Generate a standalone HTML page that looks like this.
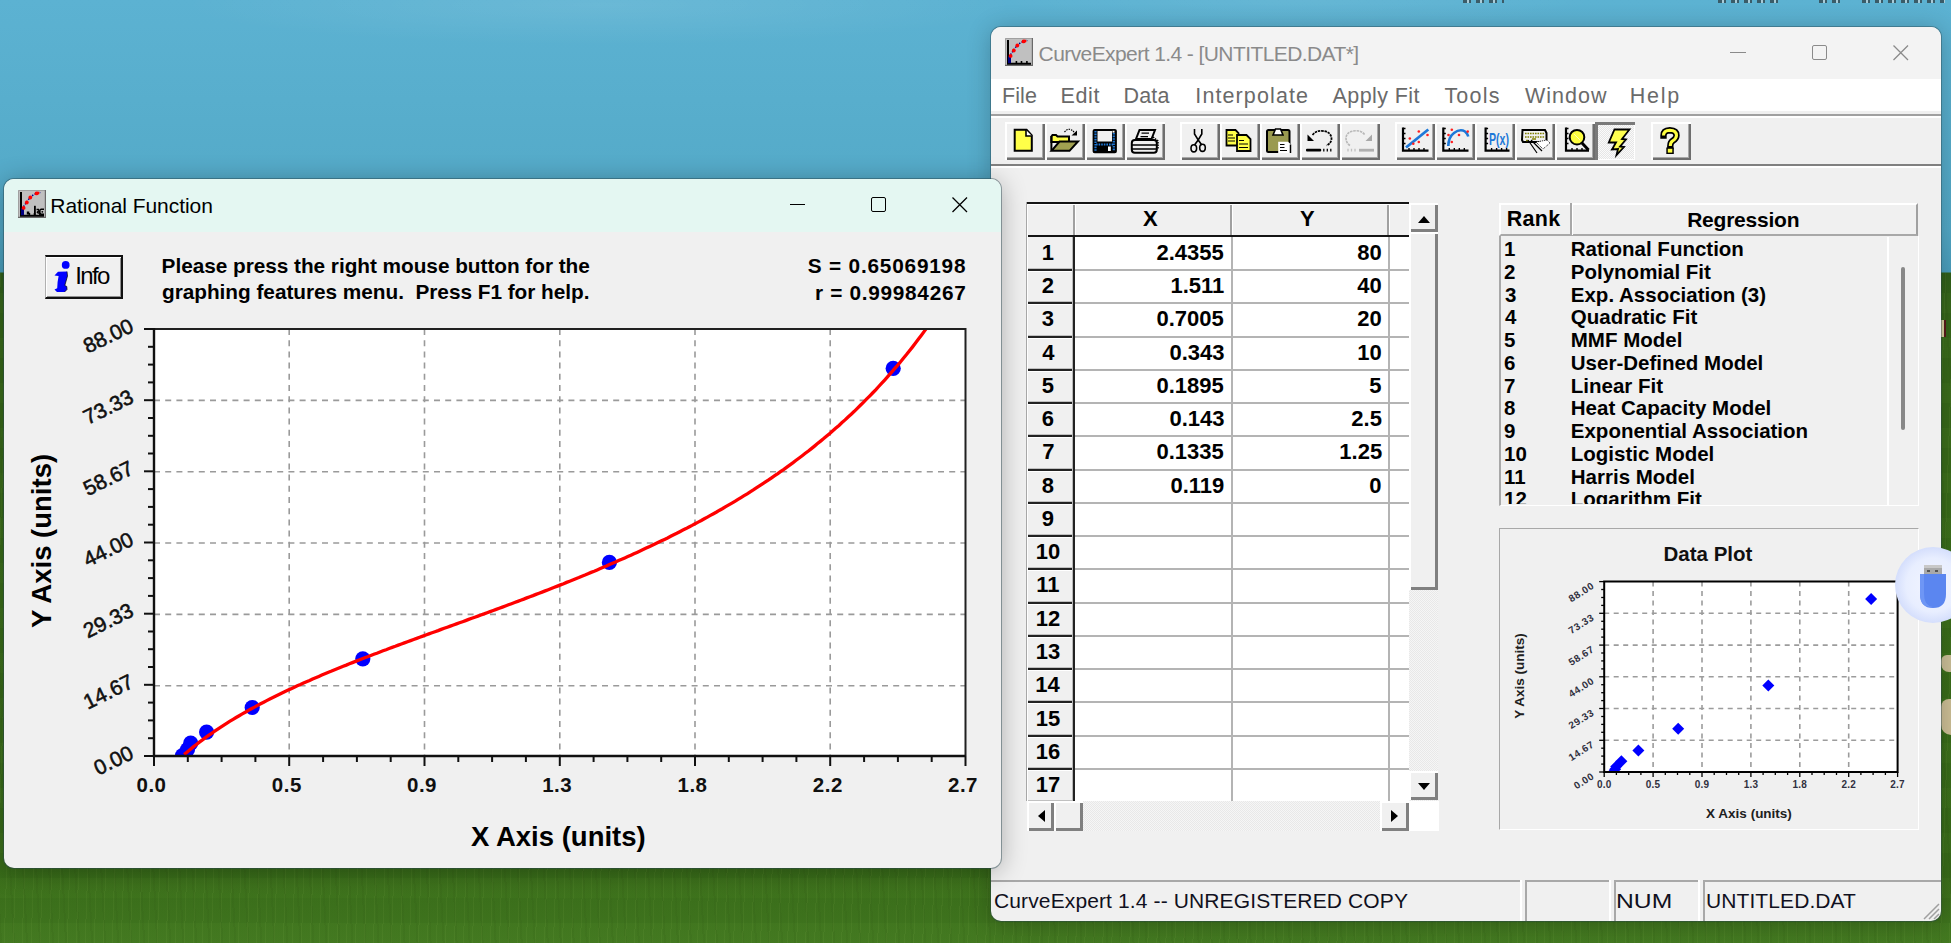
<!DOCTYPE html><html><head><meta charset="utf-8"><style>
html,body{margin:0;padding:0;width:1951px;height:943px;overflow:hidden;position:relative;background:#56acd2;font-family:"Liberation Sans",sans-serif}
div,svg{position:absolute;box-sizing:border-box}
.t{white-space:pre;line-height:1;color:#000}
</style></head><body>
<div style="left:0;top:0;width:1951px;height:943px;background:linear-gradient(180deg,rgb(92,178,210) 0px,rgb(88,174,205) 100px,rgb(82,168,198) 230px,rgb(74,158,188) 272px,rgb(50,98,28) 273px,rgb(56,106,26) 330px,rgb(60,112,27) 600px,rgb(58,110,26) 870px,rgb(66,120,32) 943px)"></div>
<div style="left:0;top:0;width:1951px;height:120px;background:radial-gradient(ellipse 420px 40px at 600px 5px,rgba(255,255,255,0.09),rgba(255,255,255,0) 100%),radial-gradient(ellipse 300px 30px at 1300px 0px,rgba(255,255,255,0.06),rgba(255,255,255,0) 100%)"></div>
<div style="left:0;top:273px;width:1951px;height:670px;opacity:0.55;background:repeating-linear-gradient(92deg,rgba(190,220,120,0.10) 0 1px,rgba(0,0,0,0) 1px 9px),repeating-linear-gradient(87deg,rgba(30,60,10,0.12) 0 2px,rgba(0,0,0,0) 2px 13px),repeating-linear-gradient(0deg,rgba(120,170,60,0.06) 0 20px,rgba(20,50,10,0.06) 20px 45px)"></div>
<div style="left:1463px;top:0;width:41px;height:3px;opacity:0.6;background:repeating-linear-gradient(90deg,#222 0 4px,#ddd 4px 6px,#222 6px 8px,rgba(0,0,0,0) 8px 13px)"></div>
<div style="left:1718px;top:0;width:63px;height:3px;opacity:0.6;background:repeating-linear-gradient(90deg,#222 0 4px,#ddd 4px 6px,#222 6px 8px,rgba(0,0,0,0) 8px 13px)"></div>
<div style="left:1819px;top:0;width:22px;height:3px;opacity:0.6;background:repeating-linear-gradient(90deg,#222 0 4px,#ddd 4px 6px,#222 6px 8px,rgba(0,0,0,0) 8px 13px)"></div>
<div style="left:1862px;top:0;width:83px;height:3px;opacity:0.6;background:repeating-linear-gradient(90deg,#222 0 4px,#ddd 4px 6px,#222 6px 8px,rgba(0,0,0,0) 8px 13px)"></div>
<div style="left:1941px;top:655px;width:14px;height:17px;border-radius:6px 0 0 8px;background:#cbbf98"></div>
<div style="left:1941px;top:699px;width:14px;height:36px;border-radius:8px 0 0 10px;background:#cdbf96"></div>
<div style="left:1941px;top:320px;width:5px;height:17px;background:#d8d0a0;border-right:2px solid #5a1a1a"></div>
<div style="left:991px;top:27px;width:950px;height:894px;background:#f0f0f0;border-radius:10px;overflow:hidden;box-shadow:0 0 0 1px rgba(40,70,80,0.4),0 2px 24px rgba(0,0,0,0.24)">
<div style="left:0px;top:0px;width:950px;height:52px;background:#f3f3f3"></div>
<svg style="left:14px;top:11px" width="28" height="28" viewBox="0 0 28 28"><rect x="0" y="0" width="28" height="28" fill="#c0c0c0"/><path d="M0.5 27.5 V0.5 H27.5" stroke="#a0a0a0" stroke-width="1" fill="none"/><path d="M0 27.4 H28 M27.4 0 V28" stroke="#6a6a6a" stroke-width="1.2" fill="none"/><path d="M3 2 V25.8 H26" stroke="#000" stroke-width="2" fill="none"/><path d="M11.4 25 V23 M16.5 25 V23 M21.9 25 V23" stroke="#000" stroke-width="1.6"/><rect x="3" y="18.7" width="3" height="6.5" fill="#000080"/><path d="M4 19 L8.6 12.2 L12.2 7.1 L16 4.5 L22.3 2.4" stroke="#000090" stroke-width="1.5" fill="none" stroke-dasharray="1.4 1.4"/><circle cx="5.6" cy="17.9" r="1.9" fill="#f00"/><circle cx="8.8" cy="12.5" r="1.9" fill="#f00"/><circle cx="12.3" cy="7.5" r="1.9" fill="#f00"/><circle cx="18.5" cy="3.4" r="1.9" fill="#f00"/><circle cx="20" cy="3" r="1.5" fill="#f00"/></svg>
<div class="t" style="left:47.60px;top:16.02px;font-size:21px;;letter-spacing:-0.584px;color:#8a8a8a">CurveExpert 1.4 - [UNTITLED.DAT*]</div>
<div style="left:739px;top:25px;width:16px;height:1.2px;background:#8a8a8a"></div>
<div style="left:821px;top:18px;width:15px;height:15px;border:1.3px solid #8a8a8a;border-radius:2px"></div>
<svg style="left:902px;top:18px" width="16" height="16"><path d="M0.5 0.5L15 15M15 0.5L0.5 15" stroke="#8a8a8a" stroke-width="1.3"/></svg>
<div style="left:0px;top:52px;width:950px;height:32px;background:#fff"></div>
<div class="t" style="left:11.00px;top:59.10px;font-size:21.5px;;letter-spacing:0.100px;color:#6a6a6a">File</div>
<div class="t" style="left:69.40px;top:59.10px;font-size:21.5px;;letter-spacing:0.700px;color:#6a6a6a">Edit</div>
<div class="t" style="left:132.50px;top:59.10px;font-size:21.5px;;letter-spacing:0.167px;color:#6a6a6a">Data</div>
<div class="t" style="left:204.30px;top:59.10px;font-size:21.5px;;letter-spacing:1.110px;color:#6a6a6a">Interpolate</div>
<div class="t" style="left:341.50px;top:59.10px;font-size:21.5px;;letter-spacing:0.425px;color:#6a6a6a">Apply Fit</div>
<div class="t" style="left:453.40px;top:59.10px;font-size:21.5px;;letter-spacing:1.225px;color:#6a6a6a">Tools</div>
<div class="t" style="left:534.10px;top:59.10px;font-size:21.5px;;letter-spacing:0.980px;color:#6a6a6a">Window</div>
<div class="t" style="left:638.80px;top:59.10px;font-size:21.5px;;letter-spacing:1.700px;color:#6a6a6a">Help</div>
<div style="left:0px;top:87px;width:950px;height:2px;background:#a0a0a0"></div>
<div style="left:0px;top:89px;width:950px;height:2px;background:#fff"></div>
<div style="left:0px;top:137px;width:950px;height:2px;background:#808080"></div>
<div style="left:0px;top:139px;width:950px;height:2px;background:#fff"></div>
<div style="left:14px;top:95px;width:40px;height:38px;background:#f0f0f0;box-shadow:inset 2px 2px 0 #fff,inset -2px -2px 0 #6e6e6e,inset -3px -3px 0 #a8a8a8"></div>
<svg style="left:14px;top:95px" width="40" height="38" viewBox="1005 122 40 38"><path d="M1014.7 129.7 H1026.6 L1031.8 135.5 V150.8 H1014.7 Z" fill="#ffff48" stroke="#000" stroke-width="2"/><path d="M1026 130 V136 H1032" fill="#fff" stroke="#000" stroke-width="1.6"/></svg>
<div style="left:54px;top:95px;width:40px;height:38px;background:#f0f0f0;box-shadow:inset 2px 2px 0 #fff,inset -2px -2px 0 #6e6e6e,inset -3px -3px 0 #a8a8a8"></div>
<svg style="left:54px;top:95px" width="40" height="38" viewBox="1045 122 40 38"><path d="M1051.4 136.5 L1052.5 135 H1056 L1057.5 136.5 H1069 V142 H1051.4 Z" fill="#ffff48" stroke="#000" stroke-width="2"/><path d="M1051.4 136 V150.8" stroke="#000" stroke-width="2"/><path d="M1051.5 150.8 L1059.5 141.5 H1078 L1069.5 150.8 Z" fill="#a0a050" stroke="#000" stroke-width="2"/><path d="M1064.5 132 Q1069 126.5 1074 132" fill="none" stroke="#000" stroke-width="1.2" stroke-dasharray="1.5 1"/><path d="M1077 130.5 V135.5 H1071.5 Z" fill="#000"/></svg>
<div style="left:94px;top:95px;width:40px;height:38px;background:#f0f0f0;box-shadow:inset 2px 2px 0 #fff,inset -2px -2px 0 #6e6e6e,inset -3px -3px 0 #a8a8a8"></div>
<svg style="left:94px;top:95px" width="40" height="38" viewBox="1085 122 40 38"><rect x="1093.6" y="129.9" width="22.3" height="22.3" fill="#000" stroke="#000" stroke-width="2" rx="1"/><rect x="1097.5" y="131" width="14.5" height="10.5" fill="#f0f0f0"/><path d="M1095.5 131 V151 M1113.8 133 V151 M1096 144.5 H1113.5" stroke="#1e78d8" stroke-width="2.2" stroke-dasharray="1.6 1"/><rect x="1108" y="146.5" width="2.8" height="4.5" fill="#fff"/><rect x="1112.5" y="130.8" width="2" height="1.8" fill="#fff"/></svg>
<div style="left:134px;top:95px;width:40px;height:38px;background:#f0f0f0;box-shadow:inset 2px 2px 0 #fff,inset -2px -2px 0 #6e6e6e,inset -3px -3px 0 #a8a8a8"></div>
<svg style="left:134px;top:95px" width="40" height="38" viewBox="1125 122 40 38"><path d="M1139.5 130 H1155 L1151.5 139 H1136 Z" fill="#f0f0f0" stroke="#000" stroke-width="2"/><path d="M1141.5 133.2 H1149 M1140.5 136.7 H1148" stroke="#000" stroke-width="1.2"/><rect x="1131.8" y="140" width="25" height="12.7" rx="3" fill="#f0f0f0" stroke="#000" stroke-width="2"/><path d="M1132 145 H1156 M1132 149 H1156" stroke="#000" stroke-width="1.6"/><path d="M1153 137 L1158 141 V149" stroke="#000" stroke-width="1.5" fill="none" stroke-dasharray="1.5 1"/></svg>
<div style="left:189px;top:95px;width:40px;height:38px;background:#f0f0f0;box-shadow:inset 2px 2px 0 #fff,inset -2px -2px 0 #6e6e6e,inset -3px -3px 0 #a8a8a8"></div>
<svg style="left:189px;top:95px" width="40" height="38" viewBox="1180 122 40 38"><path d="M1194.5 129 V134 L1198.2 140 L1201.8 134 V129" stroke="#000" stroke-width="1.6" fill="none"/><path d="M1198.2 140 L1194.5 145 M1198.2 140 L1201.8 145" stroke="#000" stroke-width="1.6"/><ellipse cx="1193.8" cy="148.3" rx="2.8" ry="3.6" fill="none" stroke="#000" stroke-width="1.6"/><ellipse cx="1202.5" cy="147.8" rx="2.8" ry="3.6" fill="none" stroke="#000" stroke-width="1.6"/></svg>
<div style="left:229px;top:95px;width:40px;height:38px;background:#f0f0f0;box-shadow:inset 2px 2px 0 #fff,inset -2px -2px 0 #6e6e6e,inset -3px -3px 0 #a8a8a8"></div>
<svg style="left:229px;top:95px" width="40" height="38" viewBox="1220 122 40 38"><path d="M1226.5 130 H1235.5 L1238.5 133 V145.5 H1226.5 Z" fill="#ffff48" stroke="#000" stroke-width="1.8"/><path d="M1228 135 H1233 M1228 138 H1235 M1228 141 H1235" stroke="#000" stroke-width="1.1"/><path d="M1237 135 H1246.5 L1250.5 139 V151 H1237 Z" fill="#ffff48" stroke="#000" stroke-width="1.8"/><path d="M1239 140.5 H1244 M1239 144 H1248 M1239 147.5 H1248" stroke="#000" stroke-width="1.2"/></svg>
<div style="left:269px;top:95px;width:40px;height:38px;background:#f0f0f0;box-shadow:inset 2px 2px 0 #fff,inset -2px -2px 0 #6e6e6e,inset -3px -3px 0 #a8a8a8"></div>
<svg style="left:269px;top:95px" width="40" height="38" viewBox="1260 122 40 38"><rect x="1267" y="130" width="22.5" height="22" rx="1.5" fill="#9a9a50" stroke="#000" stroke-width="2"/><path d="M1273 135 L1275.5 129 H1280.5 L1283 135 Z" fill="#fff" stroke="#000" stroke-width="1.6"/><path d="M1278.2 141.8 H1288 L1291.5 145 V153 H1278.2 Z" fill="#fff" stroke="none"/><path d="M1280 144.5 H1284.5 M1280 147.5 H1284.5 M1280 150.5 H1287" stroke="#000" stroke-width="1.2"/><path d="M1290.5 144.5 V153" stroke="#000" stroke-width="1.5"/></svg>
<div style="left:309px;top:95px;width:40px;height:38px;background:#f0f0f0;box-shadow:inset 2px 2px 0 #fff,inset -2px -2px 0 #6e6e6e,inset -3px -3px 0 #a8a8a8"></div>
<svg style="left:309px;top:95px" width="40" height="38" viewBox="1300 122 40 38"><path d="M1312.5 135 Q1316 130.5 1321.5 130.8 Q1331.5 131.5 1331.5 139 Q1331 143.5 1326.5 145.5" fill="none" stroke="#000" stroke-width="1.8" stroke-dasharray="2.5 0.8"/><path d="M1307.5 134.5 V141 H1314 Z" fill="#000"/><rect x="1306" y="148.8" width="15.2" height="2.8" rx="1" fill="#000"/><path d="M1323.8 148.8 V151.6 M1327.3 148.8 V151.6 M1330.8 148.8 V151.6" stroke="#000" stroke-width="1.3"/></svg>
<div style="left:349px;top:95px;width:40px;height:38px;background:#f0f0f0;box-shadow:inset 2px 2px 0 #fff,inset -2px -2px 0 #6e6e6e,inset -3px -3px 0 #a8a8a8"></div>
<svg style="left:349px;top:95px" width="40" height="38" viewBox="1340 122 40 38"><path d="M1350 145.5 Q1346 143 1346 138 Q1346.5 131 1356 130.8 Q1361.5 130.5 1365 135" fill="none" stroke="#b8b8b8" stroke-width="1.6" stroke-dasharray="2.5 0.8"/><path d="M1372 134.5 V141 H1365.5 Z" fill="#a8a8a8"/><rect x="1359" y="148.8" width="15" height="2.8" fill="#b0b0b0"/><path d="M1348 148.8 V151.6 M1351.5 148.8 V151.6 M1355 148.8 V151.6" stroke="#c0c0c0" stroke-width="1.3"/></svg>
<div style="left:404px;top:95px;width:40px;height:38px;background:#f0f0f0;box-shadow:inset 2px 2px 0 #fff,inset -2px -2px 0 #6e6e6e,inset -3px -3px 0 #a8a8a8"></div>
<svg style="left:404px;top:95px" width="40" height="38" viewBox="1395 122 40 38"><path d="M1403 127.5 V150.7 H1428.5" stroke="#000" stroke-width="2.2" fill="none"/><path d="M1403 128.5 H1405.5 M1403 133.5 H1405.5 M1403 138.5 H1405.5 M1403 143.5 H1405.5 M1409 150 V148 M1414 150 V148 M1419 150 V148 M1424 150 V148 " stroke="#000" stroke-width="1.4"/><path d="M1406 147.5 L1428.3 129.5" stroke="#1e78d8" stroke-width="2.8"/><circle cx="1409.8" cy="138.5" r="1.3" fill="#ff2020"/><circle cx="1418.8" cy="131.5" r="1.3" fill="#ff2020"/><circle cx="1413.3" cy="143.8" r="1.3" fill="#ff2020"/><circle cx="1418.8" cy="142" r="1.3" fill="#ff2020"/><circle cx="1427.5" cy="135" r="1.3" fill="#ff2020"/></svg>
<div style="left:444px;top:95px;width:40px;height:38px;background:#f0f0f0;box-shadow:inset 2px 2px 0 #fff,inset -2px -2px 0 #6e6e6e,inset -3px -3px 0 #a8a8a8"></div>
<svg style="left:444px;top:95px" width="40" height="38" viewBox="1435 122 40 38"><path d="M1443.3 127.5 V150.7 H1468.5" stroke="#000" stroke-width="2.2" fill="none"/><path d="M1443.3 128.5 H1445.8 M1443.3 133.5 H1445.8 M1443.3 138.5 H1445.8 M1443.3 143.5 H1445.8 M1449.3 150 V148 M1454.3 150 V148 M1459.3 150 V148 M1464.3 150 V148 " stroke="#000" stroke-width="1.4"/><path d="M1448.3 146 Q1448.5 137 1454 133 Q1460 128.5 1465 131.5 Q1467.5 133.5 1468.3 136.5" fill="none" stroke="#1e78d8" stroke-width="2.6"/><circle cx="1451.8" cy="129.8" r="1.3" fill="#ff2020"/><circle cx="1448.5" cy="135" r="1.3" fill="#ff2020"/><circle cx="1459" cy="135" r="1.3" fill="#ff2020"/><circle cx="1451.8" cy="142" r="1.3" fill="#ff2020"/><circle cx="1467.7" cy="131.6" r="1.3" fill="#ff2020"/></svg>
<div style="left:484px;top:95px;width:40px;height:38px;background:#f0f0f0;box-shadow:inset 2px 2px 0 #fff,inset -2px -2px 0 #6e6e6e,inset -3px -3px 0 #a8a8a8"></div>
<svg style="left:484px;top:95px" width="40" height="38" viewBox="1475 122 40 38"><path d="M1485.6 127.5 V150.7 H1509.5" stroke="#000" stroke-width="2.2" fill="none"/><path d="M1485.6 128.5 H1488.1 M1485.6 133.5 H1488.1 M1485.6 138.5 H1488.1 M1485.6 143.5 H1488.1 M1491.6 150 V148 M1496.6 150 V148 M1501.6 150 V148 M1506.6 150 V148 " stroke="#000" stroke-width="1.4"/><text x="1489" y="144.5" font-family="Liberation Sans" font-weight="bold" font-size="17" fill="#1e78d8" textLength="20" lengthAdjust="spacingAndGlyphs">P(x)</text></svg>
<div style="left:524px;top:95px;width:40px;height:38px;background:#f0f0f0;box-shadow:inset 2px 2px 0 #fff,inset -2px -2px 0 #6e6e6e,inset -3px -3px 0 #a8a8a8"></div>
<svg style="left:524px;top:95px" width="40" height="38" viewBox="1515 122 40 38"><path d="M1522.5 130 H1545 L1546.5 133 V142 H1523 L1522 140 Z" fill="#f0f0f0" stroke="#000" stroke-width="2"/><path d="M1525 133.5 H1545 M1525 137 H1545" stroke="#808000" stroke-width="1.6" stroke-dasharray="1.6 0.9"/><path d="M1526 140.5 H1528 M1532 139 H1536" stroke="#808000" stroke-width="1.5"/><path d="M1528 140 L1537 153 M1531 140 L1542 151" stroke="#000" stroke-width="1.2"/><path d="M1536 142 L1547 140 L1550 143 L1543 149 Z" fill="#fff" stroke="#000" stroke-width="0.9" stroke-dasharray="1 1"/></svg>
<div style="left:564px;top:95px;width:40px;height:38px;background:#f0f0f0;box-shadow:inset 2px 2px 0 #fff,inset -2px -2px 0 #6e6e6e,inset -3px -3px 0 #a8a8a8"></div>
<svg style="left:564px;top:95px" width="40" height="38" viewBox="1555 122 40 38"><path d="M1566 127.5 V150.7 H1589" stroke="#000" stroke-width="2.2" fill="none"/><path d="M1566 128.5 H1568.5 M1566 133.5 H1568.5 M1566 138.5 H1568.5 M1566 143.5 H1568.5 M1572 150 V148 M1577 150 V148 M1582 150 V148 M1587 150 V148 " stroke="#000" stroke-width="1.4"/><circle cx="1577" cy="137.2" r="7.3" fill="#ffff40" stroke="#000" stroke-width="2"/><path d="M1574 134 L1580 140" stroke="#fff" stroke-width="1" opacity="0.6"/><path d="M1582 143 L1588.5 150" stroke="#000" stroke-width="3"/></svg>
<div style="left:604px;top:95px;width:40px;height:38px;background:repeating-conic-gradient(#fafafa 0 25%,#e6e6e6 0 50%) 0 0/2px 2px;box-shadow:inset 3px 3px 0 #7a7a7a,inset -1px -1px 0 #fff"></div>
<svg style="left:604px;top:95px" width="40" height="38" viewBox="1595 122 40 38"><path d="M1614.5 129.5 H1629.5 L1622 139 L1626 139.5 L1620 146.5 L1624 147 L1616.5 155 L1618 149 L1612 149.5 L1616 142.5 L1608.8 142.5 Z" fill="#ffff50" stroke="#000" stroke-width="1.8" stroke-linejoin="miter"/></svg>
<div style="left:660px;top:95px;width:40px;height:38px;background:#f0f0f0;box-shadow:inset 2px 2px 0 #fff,inset -2px -2px 0 #6e6e6e,inset -3px -3px 0 #a8a8a8"></div>
<svg style="left:660px;top:95px" width="40" height="38" viewBox="1651 122 40 38"><path d="M1663.5 135.5 Q1663.5 130.5 1669.8 130.3 Q1676.5 130.5 1676.5 135.5 Q1676.5 138.5 1672.5 141 Q1670.3 142.5 1670.3 146" fill="none" stroke="#000" stroke-width="6.4" stroke-linecap="square"/><path d="M1663.5 135.5 Q1663.5 130.5 1669.8 130.3 Q1676.5 130.5 1676.5 135.5 Q1676.5 138.5 1672.5 141 Q1670.3 142.5 1670.3 146" fill="none" stroke="#ffff40" stroke-width="3"/><rect x="1666.3" y="147.5" width="7.5" height="6.5" fill="#000"/><rect x="1667.8" y="148.8" width="4.5" height="3.8" fill="#ffff40"/></svg>
<div style="left:35px;top:175px;width:383px;height:599px;background:#fff;overflow:hidden"><div style="left:0px;top:0px;width:383px;height:35px;background:#f0f0f0"></div><div style="left:0px;top:35px;width:47px;height:600px;background:#f0f0f0"></div><div style="left:49px;top:67px;width:334px;height:2px;background:#b4b4b4"></div><div style="left:0px;top:66px;width:47px;height:1px;background:#c0c0c0"></div><div style="left:1px;top:67px;width:46px;height:2px;background:#222"></div><div style="left:2px;top:69px;width:44px;height:1px;background:#fff"></div><div style="left:49px;top:100px;width:334px;height:2px;background:#b4b4b4"></div><div style="left:0px;top:99px;width:47px;height:1px;background:#c0c0c0"></div><div style="left:1px;top:100px;width:46px;height:2px;background:#222"></div><div style="left:2px;top:102px;width:44px;height:1px;background:#fff"></div><div style="left:49px;top:134px;width:334px;height:2px;background:#b4b4b4"></div><div style="left:0px;top:133px;width:47px;height:1px;background:#c0c0c0"></div><div style="left:1px;top:134px;width:46px;height:2px;background:#222"></div><div style="left:2px;top:136px;width:44px;height:1px;background:#fff"></div><div style="left:49px;top:167px;width:334px;height:2px;background:#b4b4b4"></div><div style="left:0px;top:166px;width:47px;height:1px;background:#c0c0c0"></div><div style="left:1px;top:167px;width:46px;height:2px;background:#222"></div><div style="left:2px;top:169px;width:44px;height:1px;background:#fff"></div><div style="left:49px;top:200px;width:334px;height:2px;background:#b4b4b4"></div><div style="left:0px;top:199px;width:47px;height:1px;background:#c0c0c0"></div><div style="left:1px;top:200px;width:46px;height:2px;background:#222"></div><div style="left:2px;top:202px;width:44px;height:1px;background:#fff"></div><div style="left:49px;top:233px;width:334px;height:2px;background:#b4b4b4"></div><div style="left:0px;top:232px;width:47px;height:1px;background:#c0c0c0"></div><div style="left:1px;top:233px;width:46px;height:2px;background:#222"></div><div style="left:2px;top:235px;width:44px;height:1px;background:#fff"></div><div style="left:49px;top:267px;width:334px;height:2px;background:#b4b4b4"></div><div style="left:0px;top:266px;width:47px;height:1px;background:#c0c0c0"></div><div style="left:1px;top:267px;width:46px;height:2px;background:#222"></div><div style="left:2px;top:269px;width:44px;height:1px;background:#fff"></div><div style="left:49px;top:300px;width:334px;height:2px;background:#b4b4b4"></div><div style="left:0px;top:299px;width:47px;height:1px;background:#c0c0c0"></div><div style="left:1px;top:300px;width:46px;height:2px;background:#222"></div><div style="left:2px;top:302px;width:44px;height:1px;background:#fff"></div><div style="left:49px;top:333px;width:334px;height:2px;background:#b4b4b4"></div><div style="left:0px;top:332px;width:47px;height:1px;background:#c0c0c0"></div><div style="left:1px;top:333px;width:46px;height:2px;background:#222"></div><div style="left:2px;top:335px;width:44px;height:1px;background:#fff"></div><div style="left:49px;top:366px;width:334px;height:2px;background:#b4b4b4"></div><div style="left:0px;top:365px;width:47px;height:1px;background:#c0c0c0"></div><div style="left:1px;top:366px;width:46px;height:2px;background:#222"></div><div style="left:2px;top:368px;width:44px;height:1px;background:#fff"></div><div style="left:49px;top:400px;width:334px;height:2px;background:#b4b4b4"></div><div style="left:0px;top:399px;width:47px;height:1px;background:#c0c0c0"></div><div style="left:1px;top:400px;width:46px;height:2px;background:#222"></div><div style="left:2px;top:402px;width:44px;height:1px;background:#fff"></div><div style="left:49px;top:433px;width:334px;height:2px;background:#b4b4b4"></div><div style="left:0px;top:432px;width:47px;height:1px;background:#c0c0c0"></div><div style="left:1px;top:433px;width:46px;height:2px;background:#222"></div><div style="left:2px;top:435px;width:44px;height:1px;background:#fff"></div><div style="left:49px;top:466px;width:334px;height:2px;background:#b4b4b4"></div><div style="left:0px;top:465px;width:47px;height:1px;background:#c0c0c0"></div><div style="left:1px;top:466px;width:46px;height:2px;background:#222"></div><div style="left:2px;top:468px;width:44px;height:1px;background:#fff"></div><div style="left:49px;top:499px;width:334px;height:2px;background:#b4b4b4"></div><div style="left:0px;top:498px;width:47px;height:1px;background:#c0c0c0"></div><div style="left:1px;top:499px;width:46px;height:2px;background:#222"></div><div style="left:2px;top:501px;width:44px;height:1px;background:#fff"></div><div style="left:49px;top:533px;width:334px;height:2px;background:#b4b4b4"></div><div style="left:0px;top:532px;width:47px;height:1px;background:#c0c0c0"></div><div style="left:1px;top:533px;width:46px;height:2px;background:#222"></div><div style="left:2px;top:535px;width:44px;height:1px;background:#fff"></div><div style="left:49px;top:566px;width:334px;height:2px;background:#b4b4b4"></div><div style="left:0px;top:565px;width:47px;height:1px;background:#c0c0c0"></div><div style="left:1px;top:566px;width:46px;height:2px;background:#222"></div><div style="left:2px;top:568px;width:44px;height:1px;background:#fff"></div><div style="left:49px;top:599px;width:334px;height:2px;background:#b4b4b4"></div><div style="left:0px;top:598px;width:47px;height:1px;background:#c0c0c0"></div><div style="left:1px;top:599px;width:46px;height:2px;background:#222"></div><div style="left:2px;top:601px;width:44px;height:1px;background:#fff"></div><div style="left:49px;top:633px;width:334px;height:2px;background:#b4b4b4"></div><div style="left:0px;top:632px;width:47px;height:1px;background:#c0c0c0"></div><div style="left:1px;top:633px;width:46px;height:2px;background:#222"></div><div style="left:2px;top:635px;width:44px;height:1px;background:#fff"></div><div style="left:205px;top:35px;width:1.5px;height:600px;background:#b4b4b4"></div><div style="left:362px;top:35px;width:1.5px;height:600px;background:#b4b4b4"></div><div style="left:0px;top:0px;width:383px;height:2px;background:#151515"></div><div style="left:0px;top:33px;width:383px;height:2px;background:#151515"></div><div style="left:47px;top:2px;width:2px;height:31px;background:#a0a0a0"></div><div style="left:49px;top:2px;width:1px;height:31px;background:#fff"></div><div style="left:204px;top:2px;width:2px;height:31px;background:#a0a0a0"></div><div style="left:206px;top:2px;width:1px;height:31px;background:#fff"></div><div style="left:361px;top:2px;width:2px;height:31px;background:#a0a0a0"></div><div style="left:363px;top:2px;width:1px;height:31px;background:#fff"></div><div style="left:1px;top:2px;width:381px;height:1px;background:#fff"></div><div style="left:0px;top:0px;width:1px;height:600px;background:#a8a8a8"></div><div style="left:1px;top:2px;width:1px;height:600px;background:#fff"></div><div style="left:46px;top:35px;width:1px;height:600px;background:#b8b8b8"></div><div style="left:47px;top:35px;width:2px;height:600px;background:#222"></div><div class="t" style="left:116.90px;top:6.38px;font-size:22px;font-weight:bold;letter-spacing:0.700px;color:#000">X</div><div class="t" style="left:274.00px;top:6.18px;font-size:22px;font-weight:bold;letter-spacing:0.200px;color:#000">Y</div><div class="t" style="left:15.70px;top:39.78px;font-size:22px;font-weight:bold;color:#000">1</div><div class="t" style="left:130.40px;top:39.78px;font-size:22px;font-weight:bold;letter-spacing:0px;color:#000">2.4355</div><div class="t" style="left:331.30px;top:39.78px;font-size:22px;font-weight:bold;letter-spacing:0px;color:#000">80</div><div class="t" style="left:15.70px;top:73.05px;font-size:22px;font-weight:bold;color:#000">2</div><div class="t" style="left:144.40px;top:73.05px;font-size:22px;font-weight:bold;letter-spacing:0px;color:#000">1.511</div><div class="t" style="left:331.30px;top:73.05px;font-size:22px;font-weight:bold;letter-spacing:0px;color:#000">40</div><div class="t" style="left:15.70px;top:106.32px;font-size:22px;font-weight:bold;color:#000">3</div><div class="t" style="left:130.40px;top:106.32px;font-size:22px;font-weight:bold;letter-spacing:0px;color:#000">0.7005</div><div class="t" style="left:331.30px;top:106.32px;font-size:22px;font-weight:bold;letter-spacing:0px;color:#000">20</div><div class="t" style="left:16.20px;top:139.59px;font-size:22px;font-weight:bold;color:#000">4</div><div class="t" style="left:143.40px;top:139.59px;font-size:22px;font-weight:bold;letter-spacing:0px;color:#000">0.343</div><div class="t" style="left:331.30px;top:139.59px;font-size:22px;font-weight:bold;letter-spacing:0px;color:#000">10</div><div class="t" style="left:15.70px;top:172.86px;font-size:22px;font-weight:bold;color:#000">5</div><div class="t" style="left:130.40px;top:172.86px;font-size:22px;font-weight:bold;letter-spacing:0px;color:#000">0.1895</div><div class="t" style="left:343.30px;top:172.86px;font-size:22px;font-weight:bold;letter-spacing:0px;color:#000">5</div><div class="t" style="left:15.70px;top:206.13px;font-size:22px;font-weight:bold;color:#000">6</div><div class="t" style="left:143.40px;top:206.13px;font-size:22px;font-weight:bold;letter-spacing:0px;color:#000">0.143</div><div class="t" style="left:325.30px;top:206.13px;font-size:22px;font-weight:bold;letter-spacing:0px;color:#000">2.5</div><div class="t" style="left:16.20px;top:239.40px;font-size:22px;font-weight:bold;color:#000">7</div><div class="t" style="left:130.40px;top:239.40px;font-size:22px;font-weight:bold;letter-spacing:0px;color:#000">0.1335</div><div class="t" style="left:313.30px;top:239.40px;font-size:22px;font-weight:bold;letter-spacing:0px;color:#000">1.25</div><div class="t" style="left:15.70px;top:272.67px;font-size:22px;font-weight:bold;color:#000">8</div><div class="t" style="left:144.40px;top:272.67px;font-size:22px;font-weight:bold;letter-spacing:0px;color:#000">0.119</div><div class="t" style="left:343.30px;top:272.67px;font-size:22px;font-weight:bold;letter-spacing:0px;color:#000">0</div><div class="t" style="left:15.70px;top:305.94px;font-size:22px;font-weight:bold;color:#000">9</div><div class="t" style="left:9.70px;top:339.21px;font-size:22px;font-weight:bold;color:#000">10</div><div class="t" style="left:10.20px;top:372.48px;font-size:22px;font-weight:bold;color:#000">11</div><div class="t" style="left:9.70px;top:405.75px;font-size:22px;font-weight:bold;color:#000">12</div><div class="t" style="left:9.70px;top:439.02px;font-size:22px;font-weight:bold;color:#000">13</div><div class="t" style="left:9.20px;top:472.29px;font-size:22px;font-weight:bold;color:#000">14</div><div class="t" style="left:9.70px;top:505.56px;font-size:22px;font-weight:bold;color:#000">15</div><div class="t" style="left:9.70px;top:538.83px;font-size:22px;font-weight:bold;color:#000">16</div><div class="t" style="left:9.70px;top:572.10px;font-size:22px;font-weight:bold;color:#000">17</div></div><div style="left:418px;top:176px;width:29px;height:598px;background:repeating-conic-gradient(#f6f6f6 0 25%,#e8e8e8 0 50%) 0 0/2px 2px"></div><div style="left:418px;top:176px;width:29px;height:29px;background:#f0f0f0;box-shadow:inset 2px 2px 0 #fff,inset -3px -3px 0 #808080"></div><div style="left:418px;top:205px;width:29px;height:358px;background:#f0f0f0;box-shadow:inset 2px 2px 0 #fff,inset -3px -3px 0 #808080"></div><div style="left:418px;top:744px;width:29px;height:29px;background:#f0f0f0;box-shadow:inset 2px 2px 0 #fff,inset -3px -3px 0 #808080"></div><svg style="left:418px;top:176px" width="29" height="29"><path d="M9 20 L15 13 L21 20Z" fill="#000"/></svg><svg style="left:418px;top:744px" width="29" height="29"><path d="M9 12 L15 19 L21 12Z" fill="#000"/></svg><div style="left:36px;top:774px;width:382px;height:30px;background:repeating-conic-gradient(#f6f6f6 0 25%,#e8e8e8 0 50%) 0 0/2px 2px"></div><div style="left:36px;top:774px;width:27px;height:30px;background:#f0f0f0;box-shadow:inset 2px 2px 0 #fff,inset -3px -3px 0 #808080"></div><div style="left:63px;top:774px;width:29px;height:30px;background:#f0f0f0;box-shadow:inset 2px 2px 0 #fff,inset -3px -3px 0 #808080"></div><div style="left:389px;top:774px;width:29px;height:30px;background:#f0f0f0;box-shadow:inset 2px 2px 0 #fff,inset -3px -3px 0 #808080"></div><div style="left:418px;top:774px;width:30px;height:30px;background:#fff"></div><svg style="left:36px;top:774px" width="27" height="30"><path d="M18 9 L11 15 L18 21Z" fill="#000"/></svg><svg style="left:389px;top:774px" width="29" height="30"><path d="M11 9 L18 15 L11 21Z" fill="#000"/></svg>
<div style="left:508px;top:176px;width:419px;height:33px;background:#f0f0f0;border-top:2px solid #fff;border-left:2px solid #fff;border-right:2px solid #a0a0a0;border-bottom:2px solid #a8a8a8"></div><div style="left:579px;top:176px;width:2px;height:32px;background:#a8a8a8"></div><div style="left:581px;top:176px;width:1px;height:32px;background:#fff"></div><div class="t" style="left:515.80px;top:181.90px;font-size:21.5px;font-weight:bold;letter-spacing:0.267px;color:#000">Rank</div><div class="t" style="left:696.20px;top:182.32px;font-size:21px;font-weight:bold;letter-spacing:-0.233px;color:#000">Regression</div><div style="left:508px;top:209px;width:420px;height:270px;border-left:2px solid #a8a8a8;border-right:1.5px solid #fff;border-bottom:1.5px solid #fff;overflow:hidden"></div><div style="left:896px;top:210px;width:1.5px;height:268px;background:#fff"></div><div style="left:910px;top:240px;width:3.5px;height:163px;background:#888;border-radius:2px"></div><div style="left:510px;top:210px;width:385px;height:267px;overflow:hidden"><div class="t" style="left:3.00px;top:2.15px;font-size:20.5px;font-weight:bold;letter-spacing:0.000px;color:#000">1</div><div class="t" style="left:69.80px;top:2.15px;font-size:20.5px;font-weight:bold;letter-spacing:0.000px;color:#000">Rational Function</div><div class="t" style="left:3.00px;top:24.90px;font-size:20.5px;font-weight:bold;letter-spacing:0.000px;color:#000">2</div><div class="t" style="left:69.80px;top:24.90px;font-size:20.5px;font-weight:bold;letter-spacing:0.000px;color:#000">Polynomial Fit</div><div class="t" style="left:4.00px;top:47.65px;font-size:20.5px;font-weight:bold;letter-spacing:0.000px;color:#000">3</div><div class="t" style="left:69.80px;top:47.65px;font-size:20.5px;font-weight:bold;letter-spacing:0.000px;color:#000">Exp. Association (3)</div><div class="t" style="left:4.00px;top:70.40px;font-size:20.5px;font-weight:bold;letter-spacing:0.000px;color:#000">4</div><div class="t" style="left:69.80px;top:70.40px;font-size:20.5px;font-weight:bold;letter-spacing:0.000px;color:#000">Quadratic Fit</div><div class="t" style="left:3.00px;top:93.15px;font-size:20.5px;font-weight:bold;letter-spacing:0.000px;color:#000">5</div><div class="t" style="left:69.80px;top:93.15px;font-size:20.5px;font-weight:bold;letter-spacing:0.000px;color:#000">MMF Model</div><div class="t" style="left:3.00px;top:115.90px;font-size:20.5px;font-weight:bold;letter-spacing:0.000px;color:#000">6</div><div class="t" style="left:69.80px;top:115.90px;font-size:20.5px;font-weight:bold;letter-spacing:0.000px;color:#000">User-Defined Model</div><div class="t" style="left:3.00px;top:138.65px;font-size:20.5px;font-weight:bold;letter-spacing:0.000px;color:#000">7</div><div class="t" style="left:69.80px;top:138.65px;font-size:20.5px;font-weight:bold;letter-spacing:0.000px;color:#000">Linear Fit</div><div class="t" style="left:3.00px;top:161.40px;font-size:20.5px;font-weight:bold;letter-spacing:0.000px;color:#000">8</div><div class="t" style="left:69.80px;top:161.40px;font-size:20.5px;font-weight:bold;letter-spacing:0.000px;color:#000">Heat Capacity Model</div><div class="t" style="left:3.00px;top:184.15px;font-size:20.5px;font-weight:bold;letter-spacing:0.000px;color:#000">9</div><div class="t" style="left:69.80px;top:184.15px;font-size:20.5px;font-weight:bold;letter-spacing:0.000px;color:#000">Exponential Association</div><div class="t" style="left:3.00px;top:206.90px;font-size:20.5px;font-weight:bold;letter-spacing:0.000px;color:#000">10</div><div class="t" style="left:69.80px;top:206.90px;font-size:20.5px;font-weight:bold;letter-spacing:0.000px;color:#000">Logistic Model</div><div class="t" style="left:3.00px;top:229.65px;font-size:20.5px;font-weight:bold;letter-spacing:0.000px;color:#000">11</div><div class="t" style="left:69.80px;top:229.65px;font-size:20.5px;font-weight:bold;letter-spacing:0.000px;color:#000">Harris Model</div><div class="t" style="left:3.00px;top:252.40px;font-size:20.5px;font-weight:bold;letter-spacing:0.000px;color:#000">12</div><div class="t" style="left:69.80px;top:252.40px;font-size:20.5px;font-weight:bold;letter-spacing:0.000px;color:#000">Logarithm Fit</div></div>
<div style="left:508px;top:501px;width:419.5px;height:302px;border-top:1.5px solid #a8a8a8;border-left:1.5px solid #a8a8a8;border-right:1.5px solid #fff;border-bottom:1.5px solid #fff"></div><svg style="left:508px;top:502px" width="420" height="301" viewBox="1499 529 420 301"><text x="1708" y="561" text-anchor="middle" font-family="Liberation Sans" font-weight="bold" font-size="20.5" fill="#101010">Data Plot</text><rect x="1604.2" y="581.6" width="293.39999999999986" height="190.39999999999998" fill="#fff"/><path d="M1653.1 581.6 V772" stroke="#9c9c9c" stroke-width="1.6" stroke-dasharray="5 4.5"/><path d="M1604.2 740.3 H1897.6" stroke="#9c9c9c" stroke-width="1.6" stroke-dasharray="5 4.5"/><path d="M1702.0 581.6 V772" stroke="#9c9c9c" stroke-width="1.6" stroke-dasharray="5 4.5"/><path d="M1604.2 708.5 H1897.6" stroke="#9c9c9c" stroke-width="1.6" stroke-dasharray="5 4.5"/><path d="M1750.9 581.6 V772" stroke="#9c9c9c" stroke-width="1.6" stroke-dasharray="5 4.5"/><path d="M1604.2 676.8 H1897.6" stroke="#9c9c9c" stroke-width="1.6" stroke-dasharray="5 4.5"/><path d="M1799.8 581.6 V772" stroke="#9c9c9c" stroke-width="1.6" stroke-dasharray="5 4.5"/><path d="M1604.2 645.1 H1897.6" stroke="#9c9c9c" stroke-width="1.6" stroke-dasharray="5 4.5"/><path d="M1848.7 581.6 V772" stroke="#9c9c9c" stroke-width="1.6" stroke-dasharray="5 4.5"/><path d="M1604.2 613.3 H1897.6" stroke="#9c9c9c" stroke-width="1.6" stroke-dasharray="5 4.5"/><clipPath id="cp2"><rect x="1604.2" y="581.6" width="293.39999999999986" height="190.39999999999998"/></clipPath><g clip-path="url(#cp2)"><path d="M1871.1 592.9 L1877.1 598.9 L1871.1 604.9 L1865.1 598.9Z" fill="#00f"/><path d="M1768.3 679.5 L1774.3 685.5 L1768.3 691.5 L1762.3 685.5Z" fill="#00f"/><path d="M1678.2 722.7 L1684.2 728.7 L1678.2 734.7 L1672.2 728.7Z" fill="#00f"/><path d="M1638.4 744.4 L1644.4 750.4 L1638.4 756.4 L1632.4 750.4Z" fill="#00f"/><path d="M1621.4 755.2 L1627.4 761.2 L1621.4 767.2 L1615.4 761.2Z" fill="#00f"/><path d="M1616.2 760.6 L1622.2 766.6 L1616.2 772.6 L1610.2 766.6Z" fill="#00f"/><path d="M1615.1 763.3 L1621.1 769.3 L1615.1 775.3 L1609.1 769.3Z" fill="#00f"/><path d="M1613.5 766.0 L1619.5 772.0 L1613.5 778.0 L1607.5 772.0Z" fill="#00f"/></g><path d="M1604.2 581.6 H1897.6 V772 H1604.2 Z" stroke="#000" stroke-width="2" fill="none"/><path d="M1604.2 772 V777" stroke="#000" stroke-width="1.3"/><path d="M1604.2 772.0 H1599.2" stroke="#000" stroke-width="1.3"/><path d="M1616.4 772 V775" stroke="#000" stroke-width="1.3"/><path d="M1604.2 764.1 H1601.2" stroke="#000" stroke-width="1.3"/><path d="M1628.7 772 V775" stroke="#000" stroke-width="1.3"/><path d="M1604.2 756.1 H1601.2" stroke="#000" stroke-width="1.3"/><path d="M1640.9 772 V775" stroke="#000" stroke-width="1.3"/><path d="M1604.2 748.2 H1601.2" stroke="#000" stroke-width="1.3"/><path d="M1653.1 772 V777" stroke="#000" stroke-width="1.3"/><path d="M1604.2 740.3 H1599.2" stroke="#000" stroke-width="1.3"/><path d="M1665.3 772 V775" stroke="#000" stroke-width="1.3"/><path d="M1604.2 732.3 H1601.2" stroke="#000" stroke-width="1.3"/><path d="M1677.5 772 V775" stroke="#000" stroke-width="1.3"/><path d="M1604.2 724.4 H1601.2" stroke="#000" stroke-width="1.3"/><path d="M1689.8 772 V775" stroke="#000" stroke-width="1.3"/><path d="M1604.2 716.5 H1601.2" stroke="#000" stroke-width="1.3"/><path d="M1702.0 772 V777" stroke="#000" stroke-width="1.3"/><path d="M1604.2 708.5 H1599.2" stroke="#000" stroke-width="1.3"/><path d="M1714.2 772 V775" stroke="#000" stroke-width="1.3"/><path d="M1604.2 700.6 H1601.2" stroke="#000" stroke-width="1.3"/><path d="M1726.5 772 V775" stroke="#000" stroke-width="1.3"/><path d="M1604.2 692.7 H1601.2" stroke="#000" stroke-width="1.3"/><path d="M1738.7 772 V775" stroke="#000" stroke-width="1.3"/><path d="M1604.2 684.7 H1601.2" stroke="#000" stroke-width="1.3"/><path d="M1750.9 772 V777" stroke="#000" stroke-width="1.3"/><path d="M1604.2 676.8 H1599.2" stroke="#000" stroke-width="1.3"/><path d="M1763.1 772 V775" stroke="#000" stroke-width="1.3"/><path d="M1604.2 668.9 H1601.2" stroke="#000" stroke-width="1.3"/><path d="M1775.3 772 V775" stroke="#000" stroke-width="1.3"/><path d="M1604.2 660.9 H1601.2" stroke="#000" stroke-width="1.3"/><path d="M1787.6 772 V775" stroke="#000" stroke-width="1.3"/><path d="M1604.2 653.0 H1601.2" stroke="#000" stroke-width="1.3"/><path d="M1799.8 772 V777" stroke="#000" stroke-width="1.3"/><path d="M1604.2 645.1 H1599.2" stroke="#000" stroke-width="1.3"/><path d="M1812.0 772 V775" stroke="#000" stroke-width="1.3"/><path d="M1604.2 637.1 H1601.2" stroke="#000" stroke-width="1.3"/><path d="M1824.2 772 V775" stroke="#000" stroke-width="1.3"/><path d="M1604.2 629.2 H1601.2" stroke="#000" stroke-width="1.3"/><path d="M1836.5 772 V775" stroke="#000" stroke-width="1.3"/><path d="M1604.2 621.3 H1601.2" stroke="#000" stroke-width="1.3"/><path d="M1848.7 772 V777" stroke="#000" stroke-width="1.3"/><path d="M1604.2 613.3 H1599.2" stroke="#000" stroke-width="1.3"/><path d="M1860.9 772 V775" stroke="#000" stroke-width="1.3"/><path d="M1604.2 605.4 H1601.2" stroke="#000" stroke-width="1.3"/><path d="M1873.1 772 V775" stroke="#000" stroke-width="1.3"/><path d="M1604.2 597.5 H1601.2" stroke="#000" stroke-width="1.3"/><path d="M1885.4 772 V775" stroke="#000" stroke-width="1.3"/><path d="M1604.2 589.5 H1601.2" stroke="#000" stroke-width="1.3"/><path d="M1897.6 772 V777" stroke="#000" stroke-width="1.3"/><path d="M1604.2 581.6 H1599.2" stroke="#000" stroke-width="1.3"/><text x="1604.2" y="787.5" text-anchor="middle" font-family="Liberation Sans" font-weight="bold" font-size="10" letter-spacing="0.2" fill="#303040">0.0</text><text x="1653.1" y="787.5" text-anchor="middle" font-family="Liberation Sans" font-weight="bold" font-size="10" letter-spacing="0.2" fill="#303040">0.5</text><text x="1702.0" y="787.5" text-anchor="middle" font-family="Liberation Sans" font-weight="bold" font-size="10" letter-spacing="0.2" fill="#303040">0.9</text><text x="1750.9" y="787.5" text-anchor="middle" font-family="Liberation Sans" font-weight="bold" font-size="10" letter-spacing="0.2" fill="#303040">1.3</text><text x="1799.8" y="787.5" text-anchor="middle" font-family="Liberation Sans" font-weight="bold" font-size="10" letter-spacing="0.2" fill="#303040">1.8</text><text x="1848.7" y="787.5" text-anchor="middle" font-family="Liberation Sans" font-weight="bold" font-size="10" letter-spacing="0.2" fill="#303040">2.2</text><text x="1897.6" y="787.5" text-anchor="middle" font-family="Liberation Sans" font-weight="bold" font-size="10" letter-spacing="0.2" fill="#303040">2.7</text><text transform="translate(1595 778.0) rotate(-32)" text-anchor="end" font-family="Liberation Sans" font-weight="bold" font-size="10" letter-spacing="0.6" fill="#303040">0.00</text><text transform="translate(1595 746.3) rotate(-32)" text-anchor="end" font-family="Liberation Sans" font-weight="bold" font-size="10" letter-spacing="0.6" fill="#303040">14.67</text><text transform="translate(1595 714.5) rotate(-32)" text-anchor="end" font-family="Liberation Sans" font-weight="bold" font-size="10" letter-spacing="0.6" fill="#303040">29.33</text><text transform="translate(1595 682.8) rotate(-32)" text-anchor="end" font-family="Liberation Sans" font-weight="bold" font-size="10" letter-spacing="0.6" fill="#303040">44.00</text><text transform="translate(1595 651.1) rotate(-32)" text-anchor="end" font-family="Liberation Sans" font-weight="bold" font-size="10" letter-spacing="0.6" fill="#303040">58.67</text><text transform="translate(1595 619.3) rotate(-32)" text-anchor="end" font-family="Liberation Sans" font-weight="bold" font-size="10" letter-spacing="0.6" fill="#303040">73.33</text><text transform="translate(1595 587.6) rotate(-32)" text-anchor="end" font-family="Liberation Sans" font-weight="bold" font-size="10" letter-spacing="0.6" fill="#303040">88.00</text><text x="1749" y="818" text-anchor="middle" font-family="Liberation Sans" font-weight="bold" font-size="13.5" fill="#202020">X Axis (units)</text><text transform="translate(1524 676) rotate(-90)" text-anchor="middle" font-family="Liberation Sans" font-weight="bold" font-size="13.5" fill="#202020">Y Axis (units)</text></svg>
<div style="left:0px;top:853px;width:529px;height:2px;background:#a8a8a8"></div><div style="left:529px;top:853px;width:2px;height:45px;background:#fff"></div><div style="left:533.5px;top:853px;width:84.5px;height:45px;border-left:2px solid #a8a8a8;border-top:2px solid #a8a8a8"></div><div style="left:618px;top:853px;width:2px;height:45px;background:#fff"></div><div style="left:623px;top:853px;width:84px;height:45px;border-left:2px solid #a8a8a8;border-top:2px solid #a8a8a8"></div><div style="left:707px;top:853px;width:2px;height:45px;background:#fff"></div><div style="left:712px;top:853px;width:242px;height:45px;border-left:2px solid #a8a8a8;border-top:2px solid #a8a8a8"></div><div style="left:954px;top:853px;width:2px;height:45px;background:#fff"></div><div class="t" style="left:3.00px;top:862.52px;font-size:21px;;letter-spacing:0.123px;color:#101020">CurveExpert 1.4 -- UNREGISTERED COPY</div><div class="t" style="left:625.15px;top:862.62px;font-size:21px;;color:#101020;transform:scaleX(1.1750);transform-origin:0 0">NUM</div><div class="t" style="left:715.00px;top:862.62px;font-size:21px;;letter-spacing:0.091px;color:#101020">UNTITLED.DAT</div><svg style="left:927px;top:871px" width="22" height="22"><path d="M21 6 L6 21 M21 11 L11 21 M21 16 L16 21" stroke="#a0a0a0" stroke-width="1.5"/></svg>
</div>
<div style="left:4px;top:179px;width:997px;height:689px;background:#f0f0f0;border-radius:10px;overflow:hidden;box-shadow:0 0 0 1px rgba(40,70,80,0.45),0 3px 26px rgba(0,0,0,0.3)">
<div style="left:0px;top:0px;width:997px;height:53px;background:rgb(228,247,242)"></div>
<svg style="left:14px;top:11px" width="28" height="28" viewBox="0 0 28 28"><rect x="0" y="0" width="28" height="28" fill="#c0c0c0"/><path d="M0.5 27.5 V0.5 H27.5" stroke="#a0a0a0" stroke-width="1" fill="none"/><path d="M0 27.4 H28 M27.4 0 V28" stroke="#6a6a6a" stroke-width="1.2" fill="none"/><path d="M3 2 V25.8 H26" stroke="#000" stroke-width="2" fill="none"/><path d="M11.4 25 V23 M16.5 25 V23 M21.9 25 V23" stroke="#000" stroke-width="1.6"/><rect x="3" y="18.7" width="3" height="6.5" fill="#000080"/><path d="M4 19 L8.6 12.2 L12.2 7.1 L16 4.5 L22.3 2.4" stroke="#000090" stroke-width="1.5" fill="none" stroke-dasharray="1.4 1.4"/><circle cx="5.6" cy="17.9" r="1.9" fill="#f00"/><circle cx="8.8" cy="12.5" r="1.9" fill="#f00"/><circle cx="12.3" cy="7.5" r="1.9" fill="#f00"/><circle cx="18.5" cy="3.4" r="1.9" fill="#f00"/><circle cx="20" cy="3" r="1.5" fill="#f00"/><rect x="8.8" y="21.5" width="2.5" height="3" fill="#000"/><rect x="16" y="15.8" width="1.8" height="10" fill="#000"/><path d="M18.5 19.5 H21 M19 21.5 L21 23.5 M19 23 L21 20.5" stroke="#000" stroke-width="1.3"/><path d="M26 19.2 H23 Q21.8 19.2 21.8 21 V22.5 Q21.8 24.2 23.5 24.2 H26" stroke="#000" stroke-width="1.6" fill="none"/><circle cx="24.3" cy="21.8" r="0.9" fill="#000"/></svg>
<div class="t" style="left:46.30px;top:15.92px;font-size:21px;;letter-spacing:-0.056px;color:#000">Rational Function</div>
<div style="left:786px;top:25px;width:15px;height:1.2px;background:#000"></div>
<div style="left:867px;top:18px;width:15px;height:15px;border:1.3px solid #000;border-radius:2px"></div>
<svg style="left:948px;top:18px" width="16" height="16"><path d="M0.5 0.5L15 15M15 0.5L0.5 15" stroke="#000" stroke-width="1.3"/></svg>
<div style="left:41px;top:76px;width:78px;height:43.5px;background:#f0f0f0;border-top:2px solid #111;border-left:1px solid #b0b0b0;border-right:2px solid #111;border-bottom:2px solid #111;box-shadow:inset 1px 1px 0 #fff,inset -1px -1px 0 #909090"></div>
<svg style="left:46px;top:79px" width="22" height="38" viewBox="50 258 22 38"><circle cx="65.7" cy="264.9" r="3.9" fill="#00f"/><path d="M54.5 275.5 L58 271.8 L67 271.5 L67.5 276 L64.8 285.5 L66.8 286.5 L67 289.5 L64.5 292 L57 292 L54.5 289.5 L57.2 288.3 L57.6 282 L58.6 276 Z" fill="#00f"/><path d="M67 271.5 L67.5 276 L64.8 285.5 L66.8 286.5 L67 289.5 L64.5 292" fill="none" stroke="#000" stroke-width="1" opacity="0.7"/></svg>
<div class="t" style="left:71.30px;top:85.08px;font-size:24px;;letter-spacing:-1.633px;color:#000">Info</div>
<div class="t" style="left:157.60px;top:77.09px;font-size:20.8px;font-weight:bold;letter-spacing:-0.040px;color:#000">Please press the right mouse button for the</div>
<div class="t" style="left:158.00px;top:103.29px;font-size:20.8px;font-weight:bold;letter-spacing:-0.031px;color:#000">graphing features menu.  Press F1 for help.</div>
<div class="t" style="left:803.80px;top:77.49px;font-size:20.8px;font-weight:bold;letter-spacing:0.792px;color:#000">S = 0.65069198</div>
<div class="t" style="left:810.90px;top:103.59px;font-size:20.8px;font-weight:bold;letter-spacing:0.708px;color:#000">r = 0.99984267</div>
<svg style="left:0;top:0" width="997" height="689" viewBox="4 179 997 689"><rect x="154" y="329" width="811.5" height="427" fill="#fff"/><path d="M289.2 329 V756" stroke="#9a9a9a" stroke-width="1.6" stroke-dasharray="6 5.2"/><path d="M154 685.8 H965.5" stroke="#9a9a9a" stroke-width="1.6" stroke-dasharray="6 5.2"/><path d="M424.5 329 V756" stroke="#9a9a9a" stroke-width="1.6" stroke-dasharray="6 5.2"/><path d="M154 614.4 H965.5" stroke="#9a9a9a" stroke-width="1.6" stroke-dasharray="6 5.2"/><path d="M559.8 329 V756" stroke="#9a9a9a" stroke-width="1.6" stroke-dasharray="6 5.2"/><path d="M154 543.0 H965.5" stroke="#9a9a9a" stroke-width="1.6" stroke-dasharray="6 5.2"/><path d="M695.0 329 V756" stroke="#9a9a9a" stroke-width="1.6" stroke-dasharray="6 5.2"/><path d="M154 471.7 H965.5" stroke="#9a9a9a" stroke-width="1.6" stroke-dasharray="6 5.2"/><path d="M830.2 329 V756" stroke="#9a9a9a" stroke-width="1.6" stroke-dasharray="6 5.2"/><path d="M154 400.4 H965.5" stroke="#9a9a9a" stroke-width="1.6" stroke-dasharray="6 5.2"/><clipPath id="cp1"><rect x="154" y="329" width="811.5" height="427"/></clipPath><g clip-path="url(#cp1)"><circle cx="893.2" cy="368.4" r="7.6" fill="#00f"/><circle cx="609.4" cy="562.4" r="7.6" fill="#00f"/><circle cx="362.8" cy="658.8" r="7.6" fill="#00f"/><circle cx="252.2" cy="707.5" r="7.6" fill="#00f"/><circle cx="206.6" cy="732.1" r="7.6" fill="#00f"/><circle cx="190.7" cy="743.2" r="7.6" fill="#00f"/><circle cx="187.5" cy="749.6" r="7.6" fill="#00f"/><circle cx="182.5" cy="755.5" r="7.6" fill="#00f"/><polyline points="184.1,754.5 187.2,751.9 190.2,749.4 193.3,746.9 196.4,744.5 199.4,742.1 202.5,739.8 205.5,737.6 208.6,735.4 211.7,733.3 214.7,731.2 217.8,729.1 220.8,727.1 223.9,725.1 227.0,723.1 230.0,721.2 233.1,719.3 236.1,717.5 239.2,715.7 242.3,713.9 245.3,712.2 248.4,710.4 251.4,708.7 254.5,707.1 257.6,705.4 260.6,703.8 263.7,702.2 266.7,700.6 269.8,699.0 272.9,697.5 275.9,696.0 279.0,694.5 282.0,693.0 285.1,691.5 288.2,690.1 291.2,688.7 294.3,687.2 297.3,685.8 300.4,684.5 303.5,683.1 306.5,681.7 309.6,680.4 312.6,679.0 315.7,677.7 318.8,676.4 321.8,675.1 324.9,673.8 327.9,672.5 331.0,671.3 334.1,670.0 337.1,668.8 340.2,667.5 343.2,666.3 346.3,665.1 349.4,663.8 352.4,662.6 355.5,661.4 358.5,660.2 361.6,659.0 364.7,657.8 367.7,656.7 370.8,655.5 373.8,654.3 376.9,653.2 380.0,652.0 383.0,650.8 386.1,649.7 389.1,648.5 392.2,647.4 395.3,646.3 398.3,645.1 401.4,644.0 404.4,642.9 407.5,641.7 410.6,640.6 413.6,639.5 416.7,638.4 419.7,637.2 422.8,636.1 425.9,635.0 428.9,633.9 432.0,632.8 435.0,631.7 438.1,630.6 441.2,629.4 444.2,628.3 447.3,627.2 450.3,626.1 453.4,625.0 456.5,623.9 459.5,622.8 462.6,621.7 465.6,620.6 468.7,619.4 471.8,618.3 474.8,617.2 477.9,616.1 480.9,615.0 484.0,613.9 487.1,612.7 490.1,611.6 493.2,610.5 496.2,609.4 499.3,608.2 502.4,607.1 505.4,606.0 508.5,604.8 511.5,603.7 514.6,602.5 517.7,601.4 520.7,600.2 523.8,599.1 526.8,597.9 529.9,596.7 533.0,595.6 536.0,594.4 539.1,593.2 542.1,592.1 545.2,590.9 548.3,589.7 551.3,588.5 554.4,587.3 557.4,586.1 560.5,584.9 563.6,583.7 566.6,582.4 569.7,581.2 572.7,580.0 575.8,578.7 578.9,577.5 581.9,576.2 585.0,575.0 588.0,573.7 591.1,572.4 594.2,571.2 597.2,569.9 600.3,568.6 603.3,567.3 606.4,566.0 609.5,564.6 612.5,563.3 615.6,562.0 618.6,560.6 621.7,559.3 624.8,557.9 627.8,556.6 630.9,555.2 633.9,553.8 637.0,552.4 640.1,551.0 643.1,549.6 646.2,548.1 649.2,546.7 652.3,545.3 655.4,543.8 658.4,542.3 661.5,540.8 664.5,539.4 667.6,537.9 670.7,536.3 673.7,534.8 676.8,533.3 679.8,531.7 682.9,530.1 686.0,528.6 689.0,527.0 692.1,525.4 695.1,523.7 698.2,522.1 701.3,520.5 704.3,518.8 707.4,517.1 710.4,515.4 713.5,513.7 716.6,512.0 719.6,510.2 722.7,508.5 725.7,506.7 728.8,504.9 731.9,503.1 734.9,501.3 738.0,499.4 741.0,497.6 744.1,495.7 747.2,493.8 750.2,491.8 753.3,489.9 756.3,487.9 759.4,485.9 762.5,483.9 765.5,481.9 768.6,479.9 771.6,477.8 774.7,475.7 777.8,473.6 780.8,471.4 783.9,469.3 786.9,467.1 790.0,464.8 793.1,462.6 796.1,460.3 799.2,458.0 802.2,455.7 805.3,453.3 808.4,451.0 811.4,448.6 814.5,446.1 817.5,443.6 820.6,441.1 823.7,438.6 826.7,436.0 829.8,433.4 832.8,430.8 835.9,428.1 839.0,425.4 842.0,422.6 845.1,419.9 848.1,417.0 851.2,414.2 854.3,411.3 857.3,408.3 860.4,405.3 863.4,402.3 866.5,399.2 869.6,396.1 872.6,393.0 875.7,389.8 878.7,386.5 881.8,383.2 884.9,379.8 887.9,376.4 891.0,372.9 894.0,369.4 897.1,365.9 900.2,362.2 903.2,358.5 906.3,354.8 909.3,351.0 912.4,347.1 915.5,343.1 918.5,339.1 921.6,335.0 924.6,330.9 927.7,326.7 930.8,322.4 933.8,318.0 936.9,313.5 939.9,309.0 943.0,304.4 946.1,299.6 949.1,294.8 952.2,290.0 955.2,285.0 958.3,279.9 961.4,274.7 964.4,269.4 967.5,264.0 970.5,258.5 973.6,252.9" fill="none" stroke="#f00" stroke-width="3.3"/></g><path d="M154 329 H965.5 V756" stroke="#202020" stroke-width="2" fill="none"/><path d="M154 328 V756 H965.5" stroke="#101010" stroke-width="2.4" fill="none"/><path d="M154.0 756 V766" stroke="#101010" stroke-width="2"/><path d="M154 756.0 H144" stroke="#101010" stroke-width="2"/><path d="M187.8 756 V762" stroke="#101010" stroke-width="2"/><path d="M154 738.2 H148" stroke="#101010" stroke-width="2"/><path d="M221.6 756 V762" stroke="#101010" stroke-width="2"/><path d="M154 720.4 H148" stroke="#101010" stroke-width="2"/><path d="M255.4 756 V762" stroke="#101010" stroke-width="2"/><path d="M154 702.6 H148" stroke="#101010" stroke-width="2"/><path d="M289.2 756 V766" stroke="#101010" stroke-width="2"/><path d="M154 684.8 H144" stroke="#101010" stroke-width="2"/><path d="M323.1 756 V762" stroke="#101010" stroke-width="2"/><path d="M154 667.0 H148" stroke="#101010" stroke-width="2"/><path d="M356.9 756 V762" stroke="#101010" stroke-width="2"/><path d="M154 649.2 H148" stroke="#101010" stroke-width="2"/><path d="M390.7 756 V762" stroke="#101010" stroke-width="2"/><path d="M154 631.5 H148" stroke="#101010" stroke-width="2"/><path d="M424.5 756 V766" stroke="#101010" stroke-width="2"/><path d="M154 613.7 H144" stroke="#101010" stroke-width="2"/><path d="M458.3 756 V762" stroke="#101010" stroke-width="2"/><path d="M154 595.9 H148" stroke="#101010" stroke-width="2"/><path d="M492.1 756 V762" stroke="#101010" stroke-width="2"/><path d="M154 578.1 H148" stroke="#101010" stroke-width="2"/><path d="M525.9 756 V762" stroke="#101010" stroke-width="2"/><path d="M154 560.3 H148" stroke="#101010" stroke-width="2"/><path d="M559.8 756 V766" stroke="#101010" stroke-width="2"/><path d="M154 542.5 H144" stroke="#101010" stroke-width="2"/><path d="M593.6 756 V762" stroke="#101010" stroke-width="2"/><path d="M154 524.7 H148" stroke="#101010" stroke-width="2"/><path d="M627.4 756 V762" stroke="#101010" stroke-width="2"/><path d="M154 506.9 H148" stroke="#101010" stroke-width="2"/><path d="M661.2 756 V762" stroke="#101010" stroke-width="2"/><path d="M154 489.1 H148" stroke="#101010" stroke-width="2"/><path d="M695.0 756 V766" stroke="#101010" stroke-width="2"/><path d="M154 471.3 H144" stroke="#101010" stroke-width="2"/><path d="M728.8 756 V762" stroke="#101010" stroke-width="2"/><path d="M154 453.5 H148" stroke="#101010" stroke-width="2"/><path d="M762.6 756 V762" stroke="#101010" stroke-width="2"/><path d="M154 435.8 H148" stroke="#101010" stroke-width="2"/><path d="M796.4 756 V762" stroke="#101010" stroke-width="2"/><path d="M154 418.0 H148" stroke="#101010" stroke-width="2"/><path d="M830.2 756 V766" stroke="#101010" stroke-width="2"/><path d="M154 400.2 H144" stroke="#101010" stroke-width="2"/><path d="M864.1 756 V762" stroke="#101010" stroke-width="2"/><path d="M154 382.4 H148" stroke="#101010" stroke-width="2"/><path d="M897.9 756 V762" stroke="#101010" stroke-width="2"/><path d="M154 364.6 H148" stroke="#101010" stroke-width="2"/><path d="M931.7 756 V762" stroke="#101010" stroke-width="2"/><path d="M154 346.8 H148" stroke="#101010" stroke-width="2"/><path d="M965.5 756 V766" stroke="#101010" stroke-width="2"/><path d="M154 329.0 H144" stroke="#101010" stroke-width="2"/><text x="151.5" y="792" text-anchor="middle" font-family="Liberation Sans" font-weight="bold" font-size="20.5" letter-spacing="0.5" fill="#101010">0.0</text><text x="286.8" y="792" text-anchor="middle" font-family="Liberation Sans" font-weight="bold" font-size="20.5" letter-spacing="0.5" fill="#101010">0.5</text><text x="422.0" y="792" text-anchor="middle" font-family="Liberation Sans" font-weight="bold" font-size="20.5" letter-spacing="0.5" fill="#101010">0.9</text><text x="557.2" y="792" text-anchor="middle" font-family="Liberation Sans" font-weight="bold" font-size="20.5" letter-spacing="0.5" fill="#101010">1.3</text><text x="692.5" y="792" text-anchor="middle" font-family="Liberation Sans" font-weight="bold" font-size="20.5" letter-spacing="0.5" fill="#101010">1.8</text><text x="827.8" y="792" text-anchor="middle" font-family="Liberation Sans" font-weight="bold" font-size="20.5" letter-spacing="0.5" fill="#101010">2.2</text><text x="963.0" y="792" text-anchor="middle" font-family="Liberation Sans" font-weight="bold" font-size="20.5" letter-spacing="0.5" fill="#101010">2.7</text><text transform="translate(135 757.8) rotate(-26)" text-anchor="end" font-family="Liberation Sans" font-size="21" fill="#101010" stroke="#101010" stroke-width="0.55">0.00</text><text transform="translate(135 686.6) rotate(-26)" text-anchor="end" font-family="Liberation Sans" font-size="21" fill="#101010" stroke="#101010" stroke-width="0.55">14.67</text><text transform="translate(135 615.5) rotate(-26)" text-anchor="end" font-family="Liberation Sans" font-size="21" fill="#101010" stroke="#101010" stroke-width="0.55">29.33</text><text transform="translate(135 544.3) rotate(-26)" text-anchor="end" font-family="Liberation Sans" font-size="21" fill="#101010" stroke="#101010" stroke-width="0.55">44.00</text><text transform="translate(135 473.1) rotate(-26)" text-anchor="end" font-family="Liberation Sans" font-size="21" fill="#101010" stroke="#101010" stroke-width="0.55">58.67</text><text transform="translate(135 402.0) rotate(-26)" text-anchor="end" font-family="Liberation Sans" font-size="21" fill="#101010" stroke="#101010" stroke-width="0.55">73.33</text><text transform="translate(135 330.8) rotate(-26)" text-anchor="end" font-family="Liberation Sans" font-size="21" fill="#101010" stroke="#101010" stroke-width="0.55">88.00</text><text x="471" y="846" font-family="Liberation Sans" font-weight="bold" font-size="27.5" fill="#000">X Axis (units)</text><text transform="translate(51 541) rotate(-90)" text-anchor="middle" font-family="Liberation Sans" font-weight="bold" font-size="27.5" fill="#000">Y Axis (units)</text></svg>
</div>
<div style="left:1895px;top:547px;width:76px;height:76px;border-radius:50%;background:radial-gradient(circle at 50% 50%,#f2f5ff 0,#e8eeff 50%,#d3ddfc 72%,#bccbf9 88%,#b4c4f7 100%)"></div>
<svg style="left:1915px;top:562px" width="36" height="50" viewBox="0 0 36 50"><rect x="9" y="3" width="18" height="10" fill="#a9a9a9"/><rect x="9" y="3" width="18" height="3" fill="#c8c8c8"/><rect x="12" y="8" width="3" height="2" fill="#555"/><rect x="20" y="8" width="3" height="2" fill="#555"/><path d="M5 12 H31 V32 Q31 46 18 46 Q5 46 5 32 Z" fill="#5b86f0"/><path d="M5 12 H9 V32 Q9 44 18 45 Q5 46 5 32 Z" fill="#6e96f5"/></svg>
</body></html>
